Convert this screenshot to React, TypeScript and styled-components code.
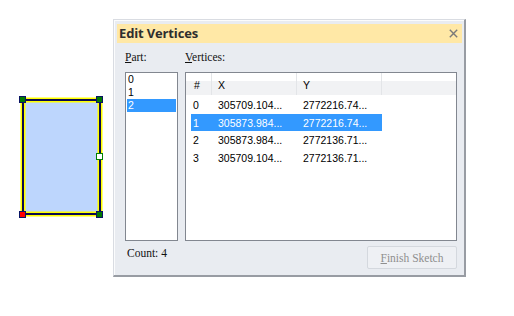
import React from "react";
import styled, { createGlobalStyle } from "styled-components";

const GlobalStyle = createGlobalStyle`
  html, body { margin: 0; padding: 0; background: #ffffff; }
  body {
    width: 514px;
    height: 316px;
    overflow: hidden;
    font-family: "Liberation Sans", Arial, sans-serif;
  }
`;

const Page = styled.div`
  display: flex;
  align-items: flex-start;
`;

const Canvas = styled.svg`
  flex: none;
  display: block;
`;

const Dialog = styled.div`
  margin-top: 19px;
  width: 353px;
  height: 258px;
  box-sizing: border-box;
  display: flex;
  flex-direction: column;
  background: #e9ecf1;
  border-left: 1px solid #d9dce2;
  border-top: 1px solid #d9dce2;
  border-right: 2px solid #989ca3;
  border-bottom: 2px solid #989ca3;
  box-shadow: inset 1px 1px 0 #fbfcfd;
`;

const TitleBar = styled.div`
  margin: 4px 2px 0 3px;
  height: 19px;
  flex: none;
  background: #ffe8a6;
  display: flex;
  align-items: center;
  justify-content: space-between;
  padding: 0 4px 0 2px;
`;

const Title = styled.span`
  font-family: "Open Sans", "Liberation Sans", sans-serif;
  font-weight: 700;
  font-size: 13px;
  letter-spacing: -0.15px;
  color: #2e2e2e;
  line-height: 19px;
`;

const CloseIcon = styled.svg`
  display: block;
`;

const Body = styled.div`
  flex: 1;
  display: flex;
  flex-direction: column;
  padding: 7px 7px 6px 11px;
`;

const Panes = styled.div`
  display: flex;
  gap: 7px;
`;

const Pane = styled.div<{ $width?: number }>`
  display: flex;
  flex-direction: column;
  ${(p) => (p.$width ? `width: ${p.$width}px; flex: none;` : "flex: 1;")}
`;

const Label = styled.div`
  height: 14px;
  line-height: 14px;
  margin-bottom: 8px;
  font-family: "Liberation Serif", "Times New Roman", serif;
  font-size: 11.5px;
  color: #111;
  white-space: nowrap;
`;

const ListBox = styled.div`
  height: 169px;
  box-sizing: border-box;
  border: 1px solid #828790;
  background: #ffffff;
  padding: 0 1px;
`;

const ListItem = styled.div<{ $selected?: boolean }>`
  height: 13px;
  line-height: 13px;
  padding-left: 1px;
  font-size: 10.5px;
  background: ${(p) => (p.$selected ? "#3399ff" : "transparent")};
  color: ${(p) => (p.$selected ? "#ffffff" : "#000000")};
`;

const Grid = styled.div`
  height: 169px;
  box-sizing: border-box;
  border: 1px solid #828790;
  background: #ffffff;
  display: flex;
  flex-direction: column;
`;

const Header = styled.div`
  height: 22px;
  flex: none;
  display: flex;
  background: linear-gradient(#ffffff 0, #ffffff 35%, #f1f2f4 35%, #f1f2f4 100%);
`;

const HeaderCell = styled.div<{ $width?: number; $pad: number; $last?: boolean }>`
  ${(p) => (p.$width ? `width: ${p.$width}px; flex: none;` : "flex: 1;")}
  box-sizing: border-box;
  padding-left: ${(p) => p.$pad}px;
  padding-top: 2px;
  line-height: 20px;
  font-size: 10.5px;
  color: #000;
  border-right: ${(p) => (p.$last ? "none" : "1px solid #e3e5e8")};
`;

const Rows = styled.div`
  margin-top: 1px;
  display: flex;
  flex-direction: column;
`;

const Row = styled.div<{ $selected?: boolean }>`
  display: flex;
  height: 17.5px;
  width: 191px;
  margin-left: 5px;
  background: ${(p) => (p.$selected ? "#3399ff" : "transparent")};
  color: ${(p) => (p.$selected ? "#ffffff" : "#000000")};
`;

const Cell = styled.div<{ $width: number; $pad: number }>`
  width: ${(p) => p.$width}px;
  flex: none;
  box-sizing: border-box;
  padding-left: ${(p) => p.$pad}px;
  padding-top: 2px;
  line-height: 15.5px;
  font-size: 10.5px;
  white-space: nowrap;
  overflow: hidden;
`;

const Footer = styled.div`
  margin-top: 5px;
  height: 23px;
  display: flex;
  justify-content: space-between;
`;

const CountText = styled.div`
  padding-left: 2px;
  line-height: 14px;
  font-family: "Liberation Serif", "Times New Roman", serif;
  font-size: 11.5px;
  color: #111;
`;

const Button = styled.button`
  width: 90px;
  height: 23px;
  box-sizing: border-box;
  border: 1px solid #d4d8de;
  border-radius: 2px;
  background: #eef0f4;
  padding: 0;
  font-family: "Liberation Serif", "Times New Roman", serif;
  font-size: 11.5px;
  color: #8f8f8f;
  cursor: default;
`;

const vertices = [
  { i: "0", x: "305709.104...", y: "2772216.74..." },
  { i: "1", x: "305873.984...", y: "2772216.74..." },
  { i: "2", x: "305873.984...", y: "2772136.71..." },
  { i: "3", x: "305709.104...", y: "2772136.71..." },
];

const handles = [
  { cx: 22.5, cy: 99.5, fill: "#007800", stroke: "#0a1464" },
  { cx: 99.5, cy: 99.5, fill: "#007800", stroke: "#0a1464" },
  { cx: 99.5, cy: 156.5, fill: "#ffffff", stroke: "#008000" },
  { cx: 99.5, cy: 214.5, fill: "#007800", stroke: "#0a1464" },
  { cx: 22.5, cy: 214.5, fill: "#ff0000", stroke: "#0a1464" },
];

export default function App() {
  return (
    <>
      <GlobalStyle />
      <Page>
        <Canvas width={113} height={277} viewBox="0 0 113 277">
          <rect x={23} y={100} width={77} height={114} fill="#bdd6fd" stroke="#ffff00" strokeWidth={5} />
          <rect x={23} y={100} width={77} height={114} fill="none" stroke="#0a0a50" strokeWidth={2} />
          {handles.map((h, k) => (
            <rect
              key={k}
              x={h.cx - 3}
              y={h.cy - 3}
              width={6}
              height={6}
              fill={h.fill}
              stroke={h.stroke}
              strokeWidth={1}
            />
          ))}
        </Canvas>
        <Dialog>
          <TitleBar>
            <Title>Edit Vertices</Title>
            <CloseIcon width={9} height={9} viewBox="0 0 9 9">
              <path d="M0.8 0.8 L8.2 8.2 M8.2 0.8 L0.8 8.2" stroke="#7a7a7a" strokeWidth={1.4} />
            </CloseIcon>
          </TitleBar>
          <Body>
            <Panes>
              <Pane $width={53}>
                <Label>
                  <u>P</u>art:
                </Label>
                <ListBox>
                  <ListItem>0</ListItem>
                  <ListItem>1</ListItem>
                  <ListItem $selected>2</ListItem>
                </ListBox>
              </Pane>
              <Pane>
                <Label>
                  <u>V</u>ertices:
                </Label>
                <Grid>
                  <Header>
                    <HeaderCell $width={26} $pad={8}>#</HeaderCell>
                    <HeaderCell $width={85} $pad={6}>X</HeaderCell>
                    <HeaderCell $width={85} $pad={6}>Y</HeaderCell>
                    <HeaderCell $pad={0} $last />
                  </Header>
                  <Rows>
                    {vertices.map((v) => (
                      <Row key={v.i} $selected={v.i === "1"}>
                        <Cell $width={21} $pad={2}>{v.i}</Cell>
                        <Cell $width={85} $pad={6}>{v.x}</Cell>
                        <Cell $width={85} $pad={6}>{v.y}</Cell>
                      </Row>
                    ))}
                  </Rows>
                </Grid>
              </Pane>
            </Panes>
            <Footer>
              <CountText>Count: 4</CountText>
              <Button disabled>
                <u>F</u>inish Sketch
              </Button>
            </Footer>
          </Body>
        </Dialog>
      </Page>
    </>
  );
}
